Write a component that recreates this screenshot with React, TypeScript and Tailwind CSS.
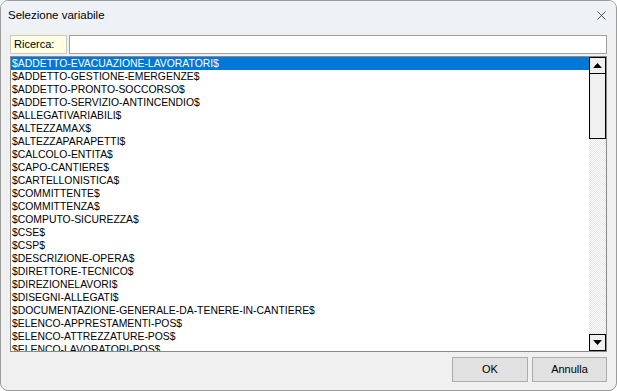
import { X } from "lucide-react";

const VARIABLES = [
  "$ADDETTO-EVACUAZIONE-LAVORATORI$",
  "$ADDETTO-GESTIONE-EMERGENZE$",
  "$ADDETTO-PRONTO-SOCCORSO$",
  "$ADDETTO-SERVIZIO-ANTINCENDIO$",
  "$ALLEGATIVARIABILI$",
  "$ALTEZZAMAX$",
  "$ALTEZZAPARAPETTI$",
  "$CALCOLO-ENTITA$",
  "$CAPO-CANTIERE$",
  "$CARTELLONISTICA$",
  "$COMMITTENTE$",
  "$COMMITTENZA$",
  "$COMPUTO-SICUREZZA$",
  "$CSE$",
  "$CSP$",
  "$DESCRIZIONE-OPERA$",
  "$DIRETTORE-TECNICO$",
  "$DIREZIONELAVORI$",
  "$DISEGNI-ALLEGATI$",
  "$DOCUMENTAZIONE-GENERALE-DA-TENERE-IN-CANTIERE$",
  "$ELENCO-APPRESTAMENTI-POS$",
  "$ELENCO-ATTREZZATURE-POS$",
  "$ELENCO-LAVORATORI-POS$",
];

function Arrow({ up }: { up?: boolean }) {
  return (
    <svg width="9" height="5" viewBox="0 0 9 5">
      {up ? <path d="M4.5 0 L9 5 L0 5 Z" fill="#000" /> : <path d="M0 0 L9 0 L4.5 5 Z" fill="#000" />}
    </svg>
  );
}

export default function App() {
  const selected = 0;

  return (
    <div className="w-[617px] h-[391px] flex flex-col overflow-hidden rounded-[8px] border border-[#9c9c9c] bg-[#f0f0f0] font-['Liberation_Sans',Arial,sans-serif] text-black">
      {/* title bar */}
      <div className="h-[29px] flex items-center justify-between pl-[7px] pr-[7px] bg-[#eef2f7]">
        <span className="text-[11.5px]">Selezione variabile</span>
        <X size={15} strokeWidth={1.2} className="text-[#222]" />
      </div>

      <div className="flex-1 flex flex-col px-[9px] pt-[5px] pb-[8px]">
        {/* search row */}
        <div className="flex h-[19px] gap-[2px]">
          <div className="w-[57px] flex items-center pl-[3px] bg-[#ffffe1] border border-[#c9c9c9] text-[11px]">
            Ricerca:
          </div>
          <div className="flex-1 bg-white border border-[#a0a0a0]" />
        </div>

        {/* list */}
        <div className="mt-[2px] h-[296px] flex border border-[#8a8a8a] bg-white">
          <div className="flex-1 overflow-hidden">
            {VARIABLES.map((v, i) => (
              <div
                key={v}
                className={
                  i === selected
                    ? "h-[13px] leading-[13px] pl-[1px] text-[10.4px] whitespace-nowrap bg-[#0078d7] text-white"
                    : "h-[13px] leading-[13px] pl-[1px] text-[10.4px] whitespace-nowrap"
                }
              >
                {v}
              </div>
            ))}
          </div>

          {/* scrollbar */}
          <div className="w-[17px] flex flex-col">
            <div className="h-[17px] flex items-center justify-center bg-[#f0f0f0] border border-black">
              <Arrow up />
            </div>
            <div className="h-[66px] -mt-[1px] bg-[#f0f0f0] border border-black" />
            <div className="flex-1 bg-[repeating-conic-gradient(#e4e4e4_0%_25%,#ffffff_0%_50%)] bg-[length:2px_2px]" />
            <div className="h-[17px] flex items-center justify-center bg-[#f0f0f0] border border-black">
              <Arrow />
            </div>
          </div>
        </div>

        {/* buttons */}
        <div className="mt-auto flex justify-end gap-[4px]">
          <button className="w-[76px] h-[25px] bg-[#e1e1e1] border border-[#adadad] text-[11px]">OK</button>
          <button className="w-[75px] h-[25px] bg-[#e1e1e1] border border-[#adadad] text-[11px]">Annulla</button>
        </div>
      </div>
    </div>
  );
}
